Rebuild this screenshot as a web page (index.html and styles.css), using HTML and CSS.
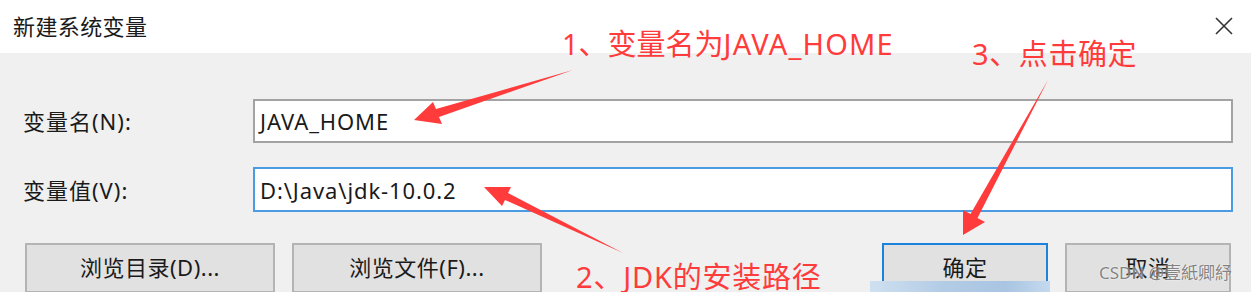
FILE: index.html
```html
<!DOCTYPE html>
<html lang="zh-CN">
<head>
<meta charset="utf-8">
<title>新建系统变量</title>
<link rel="stylesheet" href="styles.css">
</head>
<body>
<div class="dialog">
  <header class="titlebar">
    <span class="title">新建系统变量</span>
    <svg class="close" width="18" height="18" viewBox="0 0 18 18" aria-hidden="true">
      <path d="M1 1 L17 17 M17 1 L1 17" stroke="#333" stroke-width="1.6" fill="none"/>
    </svg>
  </header>
  <main class="content">
    <div class="form">
      <span class="label">变量名(N):</span>
      <div class="field">JAVA_HOME</div>
      <span class="label">变量值(V):</span>
      <div class="field focus">D:\Java\jdk-10.0.2</div>
    </div>
    <div class="buttons">
      <div class="group">
        <button class="btn wide">浏览目录(D)...</button>
        <button class="btn wide">浏览文件(F)...</button>
      </div>
      <div class="group">
        <button class="btn narrow default">确定</button>
        <button class="btn narrow">取消</button>
      </div>
    </div>
  </main>

  <div class="strip"></div>

  <svg class="arrows" width="1251" height="292" viewBox="0 0 1251 292" aria-hidden="true">
    <polygon fill="#ff3b3b" points="573,70 436,109 433,102 414,120 442,124 439,117"/>
    <polygon fill="#ff3b3b" points="623,253 508,193 511,187 484,187 502,206 505,200"/>
    <polygon fill="#ff3b3b" points="1048,80 977.5,218 985,222 963,235 963,210 970.5,214"/>
  </svg>
  <span class="note note1">1、变量名为<span class="latin">JAVA_HOME</span></span>
  <span class="note note3">3、点击确定</span>
  <span class="note note2">2、JDK的安装路径</span>
  <span class="watermark">CSDN @壹紙卿紓</span>
</div>
</body>
</html>
```

FILE: styles.css
```css
html, body {
  margin: 0;
  padding: 0;
}
body {
  width: 1251px;
  height: 292px;
  overflow: hidden;
  background: #f0f0f0;
  font-family: "Noto Sans", "Noto Sans CJK SC", sans-serif;
  color: #1a1a1a;
}
.dialog {
  position: relative;
  width: 1251px;
  height: 292px;
  overflow: hidden;
  background: #f0f0f0;
}
.titlebar {
  height: 53px;
  background: #ffffff;
  display: flex;
  align-items: center;
  justify-content: space-between;
  padding: 0 18px 0 13px;
  box-sizing: border-box;
}
.title {
  font-size: 22px;
  letter-spacing: 0.4px;
  line-height: 1;
  color: #1a1a1a;
  margin-top: -2px;
}
.close {
  display: block;
  margin-top: -2px;
}
.content {
  padding: 46px 18px 0 23px;
}
.form {
  display: grid;
  grid-template-columns: 230px 1fr;
  row-gap: 24px;
  align-items: center;
}
.label {
  font-size: 22px;
  letter-spacing: 1px;
  line-height: 1;
  color: #1a1a1a;
}
.field {
  height: 44px;
  box-sizing: border-box;
  border: 2px solid #a3a3a3;
  background: #ffffff;
  display: flex;
  align-items: center;
  padding-left: 5px;
  font-size: 22px;
  letter-spacing: 0.9px;
  color: #1a1a1a;
}
.field.focus {
  height: 45px;
  border-color: #4a9be3;
}
.buttons {
  display: flex;
  justify-content: space-between;
  margin: 31px 2px 0 2px;
}
.group {
  display: flex;
  gap: 17px;
}
.btn {
  height: 50px;
  box-sizing: border-box;
  border: 2px solid #b4b4b4;
  background: #e1e1e1;
  font-family: "Noto Sans", "Noto Sans CJK SC", sans-serif;
  font-size: 22px;
  letter-spacing: 0.5px;
  color: #1a1a1a;
  padding: 0 0 4px 0;
  margin: 0;
}
.btn.wide {
  width: 250px;
}
.btn.narrow {
  width: 166px;
}
.btn.default {
  border-color: #1c82dc;
}
.strip {
  position: absolute;
  left: 870px;
  top: 281px;
  width: 180px;
  height: 11px;
  background: linear-gradient(90deg, #cfe0f0 0%, #b3cce6 40%, #a9c5e2 75%, #c4d9ee 100%);
}
.arrows {
  position: absolute;
  left: 0;
  top: 0;
}
.note {
  position: absolute;
  font-family: "Noto Sans", "Noto Sans CJK SC", sans-serif;
  font-size: 29px;
  line-height: 1;
  color: #ff3b3b;
  white-space: nowrap;
}
.note .latin {
  letter-spacing: 1.2px;
}
.note1 {
  left: 562px;
  top: 29px;
}
.note3 {
  left: 972px;
  top: 39px;
  letter-spacing: 0.6px;
}
.note2 {
  left: 576px;
  top: 262px;
  letter-spacing: 0.8px;
}
.watermark {
  position: absolute;
  left: 1099px;
  top: 263px;
  font-family: "Noto Sans", "Noto Sans CJK SC", sans-serif;
  font-size: 17px;
  line-height: 1.2;
  color: rgba(110, 110, 110, 0.85);
  text-shadow: 0 0 2px #ffffff;
  white-space: nowrap;
}
```
